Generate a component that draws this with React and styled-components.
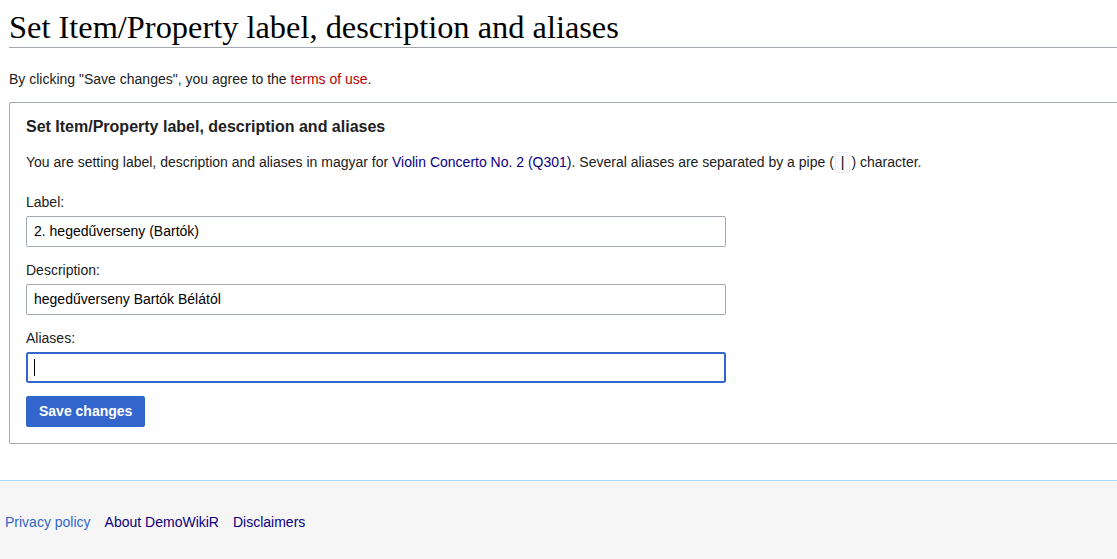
import React from 'react';
import styled, { createGlobalStyle } from 'styled-components';

const GlobalStyle = createGlobalStyle`
  html, body {
    margin: 0;
    padding: 0;
    background: #fff;
  }
  body {
    font-family: "Liberation Sans", Arial, sans-serif;
    color: #202122;
  }
`;

const Page = styled.div`
  display: flex;
  flex-direction: column;
  min-height: 559px;
  overflow: hidden;
`;

const Content = styled.main`
  padding: 8px 0 36px 9px;
`;

const Heading = styled.h1`
  margin: 0;
  padding: 0;
  font-family: "Liberation Serif", Georgia, serif;
  font-weight: normal;
  font-size: 32.4px;
  line-height: 1.2;
  color: #000;
  border-bottom: 1px solid #a2a9b1;
`;

const Notice = styled.p`
  margin: 20px 0 12px;
  font-size: 14px;
  line-height: 22px;
  color: #202122;
`;

const Link = styled.a`
  color: ${(p) => p.color || '#0645ad'};
  text-decoration: none;
  cursor: pointer;
`;

const Box = styled.fieldset`
  margin: 0;
  padding: 13px 16px 16px;
  border: 1px solid #a2a9b1;
  border-right: none;
  border-radius: 2px 0 0 2px;
  min-width: 0;
`;

const BoxTitle = styled.h2`
  margin: 0 0 13px;
  font-size: 16px;
  font-weight: bold;
  line-height: 22px;
  color: #202122;
`;

const Intro = styled.p`
  margin: 0 0 19px;
  font-size: 14px;
  line-height: 22px;
`;

const Code = styled.code`
  display: inline-block;
  font-family: "Liberation Sans", Arial, sans-serif;
  font-size: 14px;
  line-height: 19px;
  padding: 0 5px;
  margin: 0 1px;
  background: #f8f9fa;
  border: 1px solid #eaecf0;
  border-radius: 2px;
  color: #000;
`;

const Field = styled.div`
  display: flex;
  flex-direction: column;
  width: 700px;
  margin-bottom: 13px;
`;

const Label = styled.label`
  font-size: 14px;
  line-height: 20px;
  margin-bottom: 4px;
`;

const InputWrap = styled.div`
  position: relative;
`;

const Input = styled.input`
  display: block;
  box-sizing: border-box;
  height: 31px;
  width: 100%;
  padding: 0 7px;
  font-family: "Liberation Sans", Arial, sans-serif;
  font-size: 14px;
  color: #000;
  background: #fff;
  border: 1px solid ${(p) => (p.$focused ? '#36c' : '#a2a9b1')};
  border-radius: 2px;
  outline: none;
  box-shadow: ${(p) => (p.$focused ? 'inset 0 0 0 1px #36c' : 'none')};
  caret-color: transparent;
`;

const Caret = styled.span`
  position: absolute;
  left: 8px;
  top: 7px;
  width: 1px;
  height: 17px;
  background: #000;
`;

const Button = styled.button`
  display: block;
  height: 31px;
  padding: 0 12px;
  font-family: "Liberation Sans", Arial, sans-serif;
  font-size: 14px;
  font-weight: bold;
  color: #fff;
  background: #36c;
  border: 1px solid #36c;
  border-radius: 2px;
  cursor: pointer;
`;

const Footer = styled.footer`
  flex: 1;
  background: #f6f6f6;
  border-top: 1px solid #a7d7f9;
  padding: 31px 5px 0;
  display: flex;
  gap: 14px;
  font-size: 14px;
  line-height: 20px;
`;

export default function App() {
  return (
    <>
      <GlobalStyle />
      <Page>
        <Content>
          <Heading>Set Item/Property label, description and aliases</Heading>
          <Notice>
            By clicking "Save changes", you agree to the <Link color="#ba0000">terms of use</Link>.
          </Notice>
          <Box>
            <BoxTitle>Set Item/Property label, description and aliases</BoxTitle>
            <Intro>
              You are setting label, description and aliases in magyar for{' '}
              <Link color="#0b0080">Violin Concerto No. 2 (Q301)</Link>. Several aliases are separated by a
              pipe (<Code>|</Code>) character.
            </Intro>
            <Field>
              <Label>Label:</Label>
              <InputWrap>
                <Input defaultValue="2. hegedűverseny (Bartók)" />
              </InputWrap>
            </Field>
            <Field>
              <Label>Description:</Label>
              <InputWrap>
                <Input defaultValue="hegedűverseny Bartók Bélától" />
              </InputWrap>
            </Field>
            <Field>
              <Label>Aliases:</Label>
              <InputWrap>
                <Input $focused defaultValue="" />
                <Caret />
              </InputWrap>
            </Field>
            <Button>Save changes</Button>
          </Box>
        </Content>
        <Footer>
          <Link color="#36c">Privacy policy</Link>
          <Link color="#0b0080">About DemoWikiR</Link>
          <Link color="#0b0080">Disclaimers</Link>
        </Footer>
      </Page>
    </>
  );
}
